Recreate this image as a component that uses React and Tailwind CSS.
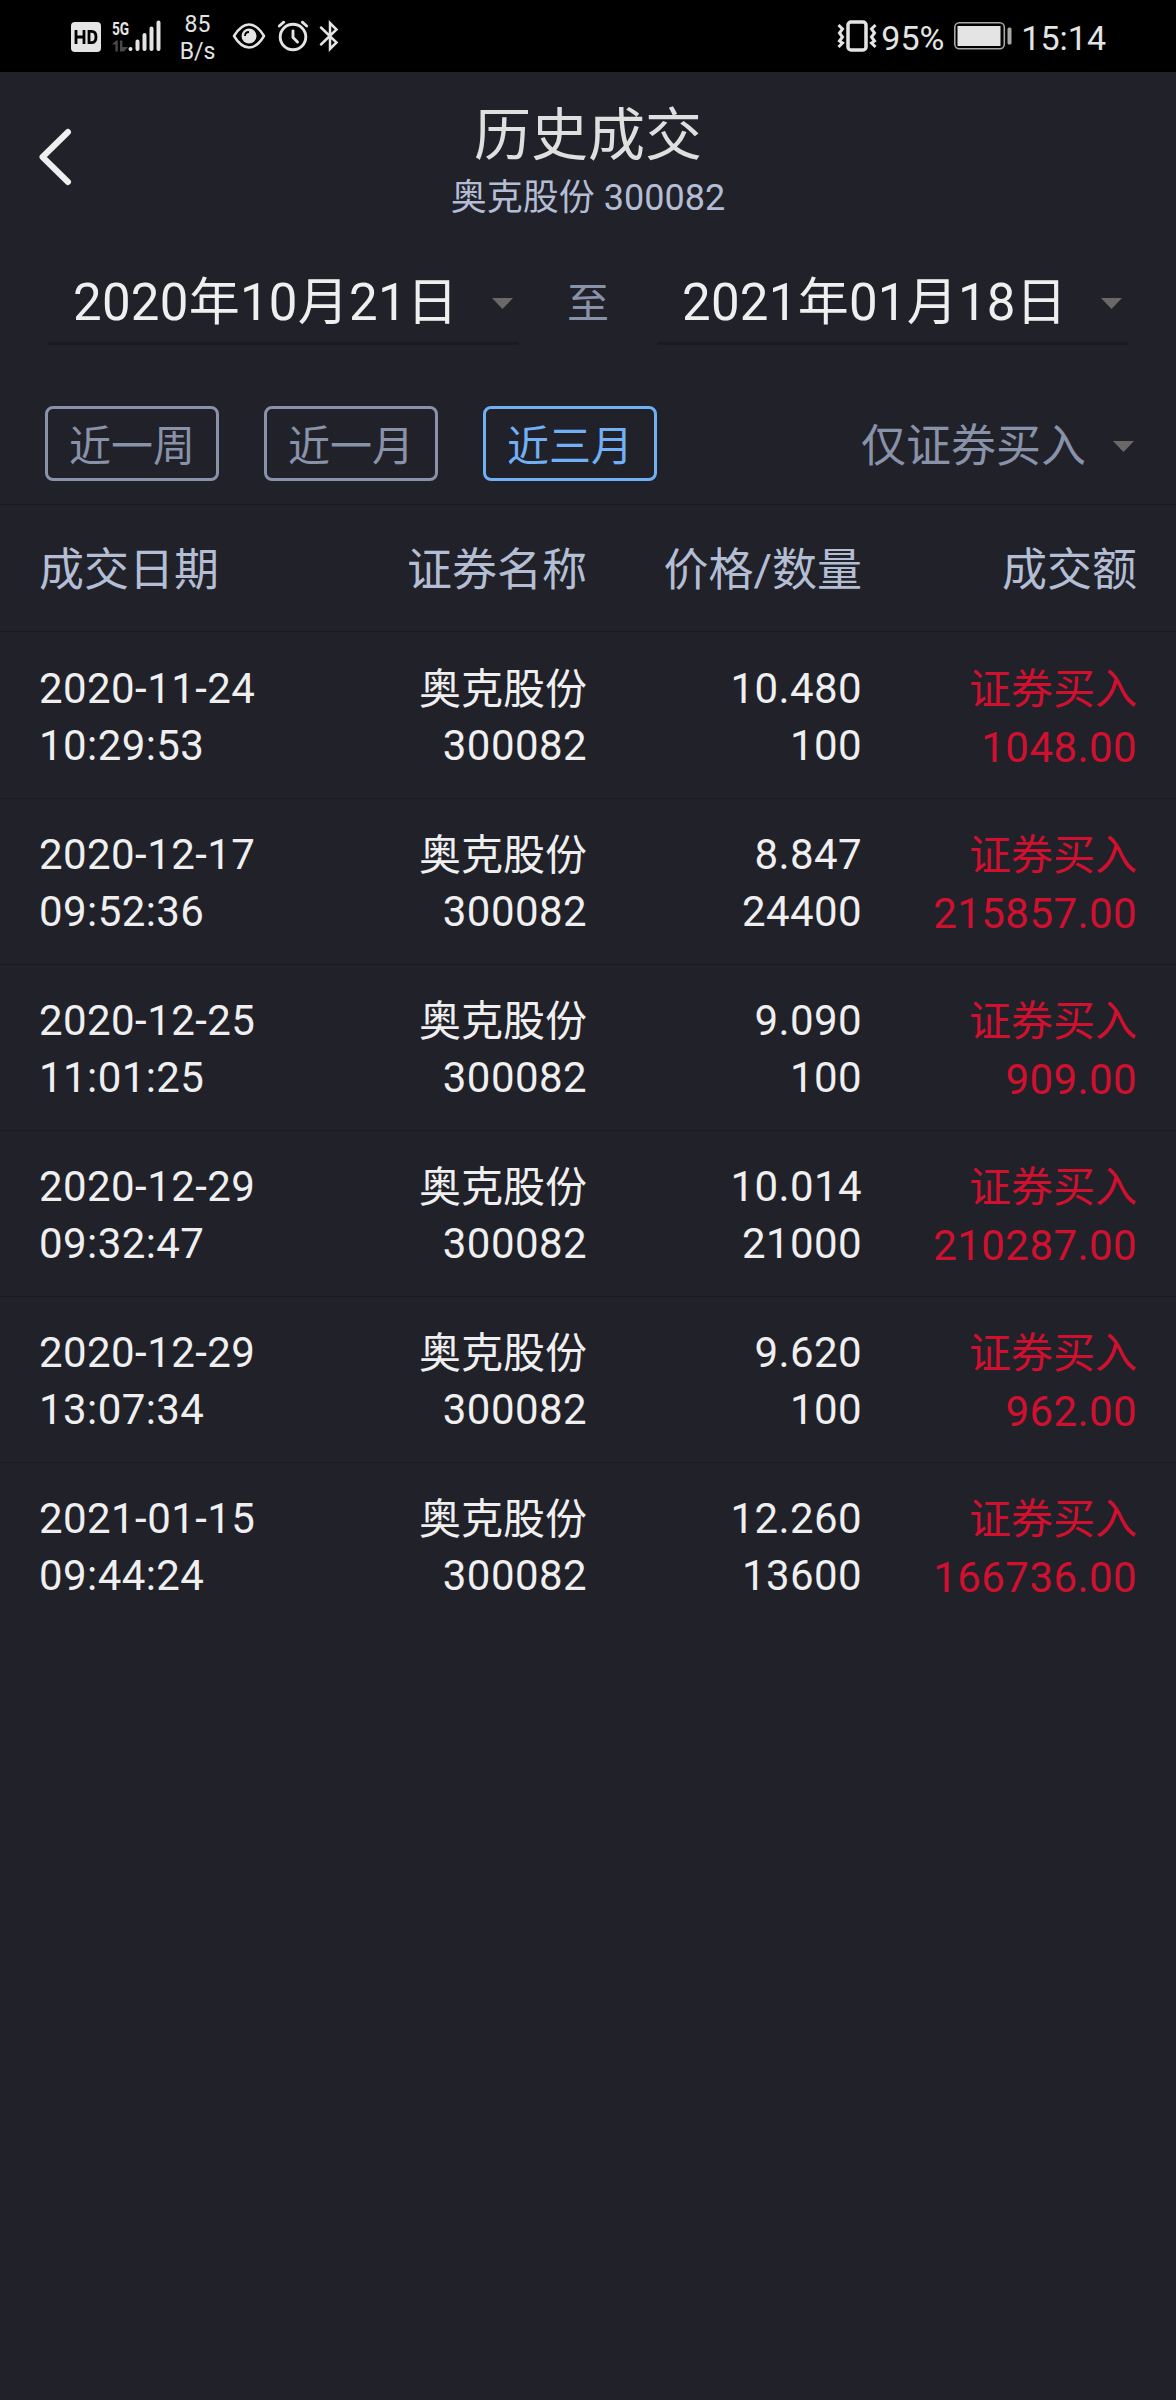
const FILTERS = [
  { label: '近一周', active: false },
  { label: '近一月', active: false },
  { label: '近三月', active: true },
]

const TRADES = [
  { date: '2020-11-24', time: '10:29:53', price: '10.480', qty: '100', amount: '1048.00' },
  { date: '2020-12-17', time: '09:52:36', price: '8.847', qty: '24400', amount: '215857.00' },
  { date: '2020-12-25', time: '11:01:25', price: '9.090', qty: '100', amount: '909.00' },
  { date: '2020-12-29', time: '09:32:47', price: '10.014', qty: '21000', amount: '210287.00' },
  { date: '2020-12-29', time: '13:07:34', price: '9.620', qty: '100', amount: '962.00' },
  { date: '2021-01-15', time: '09:44:24', price: '12.260', qty: '13600', amount: '166736.00' },
]

// 下拉小三角
function Caret() {
  return (
    <svg width="21" height="11" viewBox="0 0 21 11" className="shrink-0">
      <path d="M0 0h21L10.5 11z" fill="#6b6967" />
    </svg>
  )
}

// 系统状态栏
function StatusBar() {
  return (
    <div className="flex h-[72px] items-center justify-between bg-black pl-[71px] pr-[70px] text-[#e4e4e4]">
      <div className="flex h-full items-center">
        {/* HD 通话 */}
        <svg width="30" height="30" viewBox="0 0 30 30" className="mt-[2px]">
          <rect width="30" height="30" rx="4" fill="#e4e4e4" />
          <path d="M5 8v14M13 8v14M5 15h8M18 9.300v11.400h2.500q4.500 0 4.500-5.700t-4.500-5.700z" fill="none" stroke="#000" strokeWidth="2.800" />
        </svg>
        {/* 5G 信号 */}
        <div className="ml-[11px] flex h-[32px] w-[50px] items-end">
          <div className="flex w-[18px] flex-col">
            <span className="origin-left scale-x-[0.72] text-[19px] font-bold leading-[17px]">5G</span>
            <svg width="16" height="12" viewBox="0 0 16 12" className="mt-[3px]">
              <path d="M0 4.500L4 0.500h1.800v11H3.400V4.500zM8 0.500h2.400v6.500H16L12 11.500H8z" fill="#484848" />
            </svg>
          </div>
          <svg width="33" height="32" viewBox="0 0 33 32" className="-ml-[2px] shrink-0">
            <path d="M2.500 29v0M9.500 29V21.500M16.500 29V15M23.500 29V8.500M30.500 29V2.500" stroke="#e4e4e4" strokeWidth="4" strokeLinecap="round" />
          </svg>
        </div>
        <div className="ml-[16px] w-[39px] pt-[4px] text-center text-[23px] leading-[27px]">
          <div>85</div>
          <div>B/s</div>
        </div>
        <svg width="34" height="28" viewBox="0 0 34 28" className="ml-[15px]">
          <path d="M2 14Q9 2.500 17 2.500T32 14Q25 25.500 17 25.500T2 14z" fill="none" stroke="#e4e4e4" strokeWidth="2.500" strokeLinejoin="round" />
          <circle cx="17" cy="14" r="7.500" fill="#e4e4e4" />
          <path d="M13 14q0-4 4-4" fill="none" stroke="#000" strokeWidth="1.800" />
        </svg>
        {/* 闹钟 */}
        <svg width="32" height="32" viewBox="0 0 32 32" className="ml-[11px]">
          <g fill="none" stroke="#e4e4e4" strokeWidth="2.900" strokeLinecap="round">
            <circle cx="16" cy="17" r="12.800" />
            <path d="M16 11v6.500l4.500 4.500M2.300 6l4.400-3.800M29.700 6l-4.400-3.800" />
          </g>
        </svg>
        {/* 蓝牙 */}
        <svg width="20" height="34" viewBox="0 0 20 34" className="ml-[10px]">
          <path d="M2 8.500L17.500 23.500l-6.500 6.500V4l6.500 6.500L2 25.500" fill="none" stroke="#e4e4e4" strokeWidth="2.500" strokeLinecap="round" />
        </svg>
      </div>
      <div className="flex items-center text-[34px] leading-[36px]">
        <svg width="40" height="32" viewBox="0 0 40 32">
          <rect x="11" y="2" width="18" height="28" rx="3" fill="none" stroke="#e4e4e4" strokeWidth="3.500" />
          <path d="M1.500 5l4 4-3 4 3 4-3 4 3 2-4 4M38.500 5l-4 4 3 4-3 4 3 4-3 2 4 4" fill="none" stroke="#e4e4e4" strokeWidth="3" />
        </svg>
        <span className="ml-[4px] w-[63px] pt-[4px]">95%</span>
        <svg width="58" height="28" viewBox="0 0 58 28" className="ml-[10px]">
          <rect x="0.800" y="0.800" width="49.500" height="26" rx="4.500" fill="none" stroke="#a8a8a8" strokeWidth="1.600" />
          <rect x="3.500" y="4" width="43" height="20" fill="#e4e4e4" />
          <rect x="53.500" y="5.500" width="4" height="17" rx="1.500" fill="#a8a8a8" />
        </svg>
        <span className="ml-[9px] pt-[4px]">15:14</span>
      </div>
    </div>
  )
}

function DateField({ value }) {
  return (
    <div className="flex h-[95px] w-[471px] items-center justify-between border-b-3 border-[#1b1a22] pl-[25px] pr-[6px] pt-[14px]">
      <span className="text-[51px] leading-[60px] tracking-[0.25px] text-[#efefef]">{value}</span>
      <Caret />
    </div>
  )
}

// 单条成交记录
function TradeRow({ trade }) {
  return (
    <div className="flex h-[166px] border-t border-[#1a1a20] px-[39px] pt-[27px] text-[42px] leading-[57px] text-[#efefef] first:border-transparent">
      <div className="w-[272px] tracking-[0.42px]">
        <div>{trade.date}</div>
        <div>{trade.time}</div>
      </div>
      <div className="w-[276px] text-right">
        <div className="-mb-px pt-px">奥克股份</div>
        <div className="tracking-[0.42px]">300082</div>
      </div>
      <div className="w-[275px] text-right tracking-[0.42px]">
        <div>{trade.price}</div>
        <div>{trade.qty}</div>
      </div>
      <div className="w-[275px] text-right text-[#d0102f]">
        <div className="pt-px">证券买入</div>
        <div className="pt-px tracking-[0.42px]">{trade.amount}</div>
      </div>
    </div>
  )
}

export default function App() {
  return (
    <div className="h-[2400px] w-[1176px] bg-[#21212a] font-['Roboto','Noto_Sans_CJK_SC',sans-serif]">
      <StatusBar />

      <header className="grid h-[175px] grid-cols-[120px_1fr_120px]">
        <svg width="34" height="58" viewBox="0 0 34 58" className="ml-[38px] mt-[56px]">
          <path d="M30 4L4.500 29L30 54" fill="none" stroke="#efefef" strokeWidth="6" strokeLinecap="round" strokeLinejoin="round" />
        </svg>
        <div className="pt-[29px] text-center">
          <h1 className="text-[57px] leading-[70px] text-[#dfdfdf]">历史成交</h1>
          <p className="text-[36px] leading-[54px] text-[#b3bed4]">奥克股份 300082</p>
        </div>
      </header>

      {/* 起止日期 */}
      <div className="flex items-center justify-between px-[48px] pt-[3px]">
        <DateField value="2020年10月21日" />
        <span className="pt-[12px] text-[42px] leading-[60px] text-[#8892a9]">至</span>
        <DateField value="2021年01月18日" />
      </div>

      {/* 快捷筛选 */}
      <div className="flex h-[160px] items-center justify-between border-b border-[#1a1a20] pl-[45px] pr-[42px] pt-[61px] pb-[23px]">
        <div className="flex gap-[45px]">
          {FILTERS.map((f) => (
            <button
              key={f.label}
              className={`flex h-[75px] w-[174px] items-center justify-center rounded-[8px] border-3 pt-[6px] text-[42px] ${
                f.active ? 'border-[#72b0f5] text-[#72b0f5]' : 'border-[#8892a9] text-[#8892a9]'
              }`}
            >
              {f.label}
            </button>
          ))}
        </div>
        <div className="flex items-center gap-[27px] pt-[6px] text-[45px] text-[#8892a9]">
          仅证券买入
          <Caret />
        </div>
      </div>

      {/* 表头 */}
      <div className="flex h-[127px] items-center border-b border-[#1a1a20] px-[39px] pt-[6px] text-[45px] text-[#b3bed4]">
        <div className="w-[272px]">成交日期</div>
        <div className="w-[276px] text-right">证券名称</div>
        <div className="w-[275px] text-right">价格/数量</div>
        <div className="w-[275px] text-right">成交额</div>
      </div>

      <div>
        {TRADES.map((t) => (
          <TradeRow key={`${t.date} ${t.time}`} trade={t} />
        ))}
      </div>
    </div>
  )
}
